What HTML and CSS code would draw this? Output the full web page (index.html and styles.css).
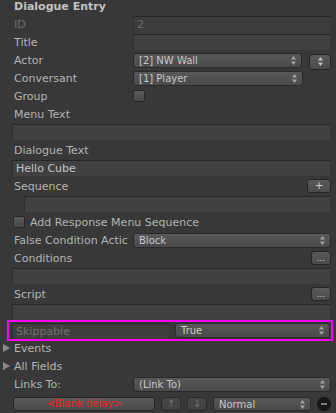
FILE: index.html
```html
<!DOCTYPE html>
<html lang="en">
<head>
    <meta charset="UTF-8">
    <meta name="viewport" content="width=device-width, initial-scale=1.0">
    <title>Dialogue Entry</title>
    <link rel="stylesheet" href="styles.css">
</head>
<body>

    <div class="inspector">
        <div class="heading">Dialogue Entry</div>

        <div class="row disabled">
            <span class="label">ID</span>
            <div class="field">2</div>
        </div>
        <div class="row">
            <span class="label">Title</span>
            <div class="field"></div>
        </div>
        <div class="row">
            <span class="label">Actor</span>
            <div class="popup">[2] NW Wall <svg class="arrows" viewBox="0 0 5 9"><polygon points="0,3.5 2.5,0 5,3.5"/><polygon points="0,5.5 2.5,9 5,5.5"/></svg></div>
            <button class="btn swap"><svg class="arrows" viewBox="0 0 5 9"><polygon points="0,3.5 2.5,0 5,3.5"/><polygon points="0,5.5 2.5,9 5,5.5"/></svg></button>
        </div>
        <div class="row">
            <span class="label">Conversant</span>
            <div class="popup popup-short">[1] Player <svg class="arrows" viewBox="0 0 5 9"><polygon points="0,3.5 2.5,0 5,3.5"/><polygon points="0,5.5 2.5,9 5,5.5"/></svg></div>
        </div>
        <div class="row">
            <span class="label">Group</span>
            <span class="checkbox"></span>
        </div>

        <div class="row">
            <span class="label">Menu Text</span>
        </div>
        <div class="row wide">
            <div class="field"></div>
        </div>
        <div class="row">
            <span class="label">Dialogue Text</span>
        </div>
        <div class="row wide">
            <div class="field">Hello Cube</div>
        </div>
        <div class="row">
            <span class="label grow">Sequence</span>
            <button class="btn small plus">+</button>
        </div>
        <div class="row indent">
            <div class="field"></div>
        </div>
        <div class="row toggle">
            <span class="checkbox"></span>
            <span>Add Response Menu Sequence</span>
        </div>
        <div class="row">
            <span class="label">False Condition Actic</span>
            <div class="popup">Block <svg class="arrows" viewBox="0 0 5 9"><polygon points="0,3.5 2.5,0 5,3.5"/><polygon points="0,5.5 2.5,9 5,5.5"/></svg></div>
        </div>
        <div class="row">
            <span class="label grow">Conditions</span>
            <button class="btn small">...</button>
        </div>
        <div class="row wide">
            <div class="field"></div>
        </div>
        <div class="row">
            <span class="label grow">Script</span>
            <button class="btn small">...</button>
        </div>
        <div class="row wide">
            <div class="field"></div>
        </div>

        <div class="row highlight">
            <div class="field muted">Skippable</div>
            <div class="popup">True <svg class="arrows" viewBox="0 0 5 9"><polygon points="0,3.5 2.5,0 5,3.5"/><polygon points="0,5.5 2.5,9 5,5.5"/></svg></div>
        </div>

        <div class="row foldout"><span class="tri"></span>Events</div>
        <div class="row foldout"><span class="tri"></span>All Fields</div>

        <div class="row">
            <span class="label">Links To:</span>
            <div class="popup">(Link To) <svg class="arrows" viewBox="0 0 5 9"><polygon points="0,3.5 2.5,0 5,3.5"/><polygon points="0,5.5 2.5,9 5,5.5"/></svg></div>
        </div>
        <div class="row links">
            <button class="btn blank">&lt;Blank delay&gt;</button>
            <button class="btn dim">&#8593;</button>
            <button class="btn dim">&#8595;</button>
            <div class="popup">Normal <svg class="arrows" viewBox="0 0 5 9"><polygon points="0,3.5 2.5,0 5,3.5"/><polygon points="0,5.5 2.5,9 5,5.5"/></svg></div>
            <span class="remove"></span>
        </div>
    </div>

</body>
</html>
```

FILE: styles.css
```css
* {
    box-sizing: border-box;
    font-family: "DejaVu Sans", Verdana, sans-serif;
}
body {
    background-color: #383838;
    margin: 0;
    color: #b4b4b4;
    font-size: 11px;
}
.inspector {
    width: 336px;
}
.heading {
    height: 15px;
    line-height: 13px;
    padding-left: 14px;
    font-weight: bold;
    color: #c2c2c2;
}
.row {
    display: flex;
    align-items: center;
    height: 18px;
    padding: 0 5px 0 14px;
    white-space: nowrap;
}
.row.wide {
    padding-left: 12px;
}
.row.indent {
    padding-left: 24px;
}
.label {
    width: 119px;
    flex: none;
    overflow: hidden;
}
.label.grow {
    flex: 1;
}
.disabled {
    color: #6c6c6c;
}
.field {
    flex: 1;
    height: 16px;
    line-height: 15px;
    padding: 0 3px;
    background: #414141;
    border-top: 1px solid #262626;
    border-left: 1px solid #2e2e2e;
    border-right: 1px solid #363636;
    color: #c4c4c4;
}
.disabled .field {
    color: #6c6c6c;
    background: #3c3c3c;
}
.field.muted {
    flex: none;
    width: 158px;
    color: #707070;
    background: #3e3e3e;
}
.popup {
    flex: 1;
    display: flex;
    align-items: center;
    justify-content: space-between;
    height: 15px;
    padding: 0 5px 0 5px;
    border: 1px solid #2a2a2a;
    border-radius: 3px;
    background: linear-gradient(#585858, #4a4a4a);
    color: #c8c8c8;
    font-size: 10px;
}
.popup-short {
    flex: none;
    width: 170px;
}
.arrows {
    width: 5px;
    height: 9px;
    flex: none;
    fill: #a4a4a4;
}
.btn {
    flex: none;
    height: 14px;
    padding: 0;
    border: 1px solid #262626;
    border-radius: 3px;
    background: linear-gradient(#5a5a5a, #4a4a4a);
    color: #c8c8c8;
    font-size: 9px;
    line-height: 10px;
    display: flex;
    align-items: center;
    justify-content: center;
}
.btn.swap {
    width: 22px;
    height: 16px;
    margin-left: 7px;
    margin-top: 3px;
}
.btn.swap .arrows {
    fill: #c4c4c4;
}
.btn.small {
    width: 20px;
}
.btn.plus {
    width: 24px;
    font-size: 11px;
}
.checkbox {
    width: 12px;
    height: 12px;
    border: 1px solid #282828;
    border-radius: 2px;
    background: linear-gradient(#5a5a5a, #484848);
}
.row.toggle {
    padding-left: 13px;
}
.toggle .checkbox {
    margin-right: 5px;
}
.row.highlight {
    height: 21px;
    margin: -1px 3px -2px 7px;
    padding: 0 1px 0 3px;
    border: 2px solid #ff00ff;
    gap: 5px;
}
.row.foldout {
    padding-left: 3px;
}
.tri {
    width: 0;
    height: 0;
    margin-right: 4px;
    border-top: 4px solid transparent;
    border-bottom: 4px solid transparent;
    border-left: 7px solid #8a8a8a;
}
.row.links {
    padding-left: 13px;
    margin-top: 2px;
    gap: 6px;
}
.links .btn {
    height: 14px;
}
.btn.blank {
    width: 142px;
    color: #ff1a1a;
    font-size: 10px;
}
.btn.dim {
    width: 20px;
    color: #707070;
    background: linear-gradient(#474747, #404040);
    border-color: #2c2c2c;
    font-size: 10px;
}
.links .popup {
    flex: none;
    width: 98px;
    height: 14px;
}
.remove {
    position: relative;
    width: 14px;
    height: 14px;
    border-radius: 50%;
    background: #161616;
}
.remove::after {
    content: "";
    position: absolute;
    left: 4px;
    top: 6px;
    width: 6px;
    height: 2px;
    background: #7a7a7a;
}
```
